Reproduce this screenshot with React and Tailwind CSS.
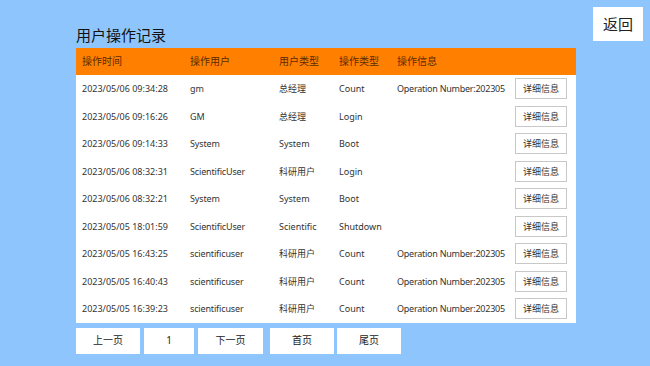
import React from "react";

const rows = [
  ["2023/05/06 09:34:28", "gm", "总经理", "Count", "Operation Number:202305"],
  ["2023/05/06 09:16:26", "GM", "总经理", "Login", ""],
  ["2023/05/06 09:14:33", "System", "System", "Boot", ""],
  ["2023/05/06 08:32:31", "ScientificUser", "科研用户", "Login", ""],
  ["2023/05/06 08:32:21", "System", "System", "Boot", ""],
  ["2023/05/05 18:01:59", "ScientificUser", "Scientific", "Shutdown", ""],
  ["2023/05/05 16:43:25", "scientificuser", "科研用户", "Count", "Operation Number:202305"],
  ["2023/05/05 16:40:43", "scientificuser", "科研用户", "Count", "Operation Number:202305"],
  ["2023/05/05 16:39:23", "scientificuser", "科研用户", "Count", "Operation Number:202305"],
];

const font = { fontFamily: '"Noto Sans", "Noto Sans CJK SC", sans-serif' };

export default function App() {
  return (
    <div
      className="relative h-[366px] w-[650px] overflow-hidden bg-[#8ec5fc] text-[#222]"
      style={font}
    >
      <button className="absolute left-[593px] top-[7px] flex h-[34px] w-[50px] items-center justify-center bg-white text-[15px] text-[#222]">
        返回
      </button>

      <div className="pl-[76px] pt-[25px]">
        <h1 className="h-[23px] text-[15px] leading-[20px] text-[#111]">用户操作记录</h1>

        <div className="w-[500px] bg-white">
          <div className="flex h-[27px] items-center bg-[#ff8000] pl-[6px] text-[10px] text-[#5c2a00]">
            <div className="w-[108px]">操作时间</div>
            <div className="w-[89px]">操作用户</div>
            <div className="w-[60px]">用户类型</div>
            <div className="w-[58px]">操作类型</div>
            <div>操作信息</div>
          </div>
          {rows.map((r, i) => (
            <div key={i} className="flex h-[27.5px] items-center pl-[6px] text-[9px] text-[#333]">
              <div className="w-[108px] whitespace-nowrap">{r[0]}</div>
              <div className="w-[89px] whitespace-nowrap tracking-[-0.15px]">{r[1]}</div>
              <div className="w-[60px] whitespace-nowrap">{r[2]}</div>
              <div className="w-[58px] whitespace-nowrap">{r[3]}</div>
              <div className="w-[118px] whitespace-nowrap tracking-[-0.25px]">{r[4]}</div>
              <button className="flex h-[21px] w-[52px] items-center justify-center border border-[#c8c8c8] bg-white text-[9px] text-[#333]">
                详细信息
              </button>
            </div>
          ))}
        </div>

        <div className="mt-[5px] flex h-[26px] text-[10px] text-[#222]">
          <button className="w-[64px] bg-white">上一页</button>
          <button className="ml-[4px] w-[50px] bg-white">1</button>
          <button className="ml-[4px] w-[65px] bg-white">下一页</button>
          <button className="ml-[7px] w-[64px] bg-white">首页</button>
          <button className="ml-[3px] w-[64px] bg-white">尾页</button>
        </div>
      </div>
    </div>
  );
}
